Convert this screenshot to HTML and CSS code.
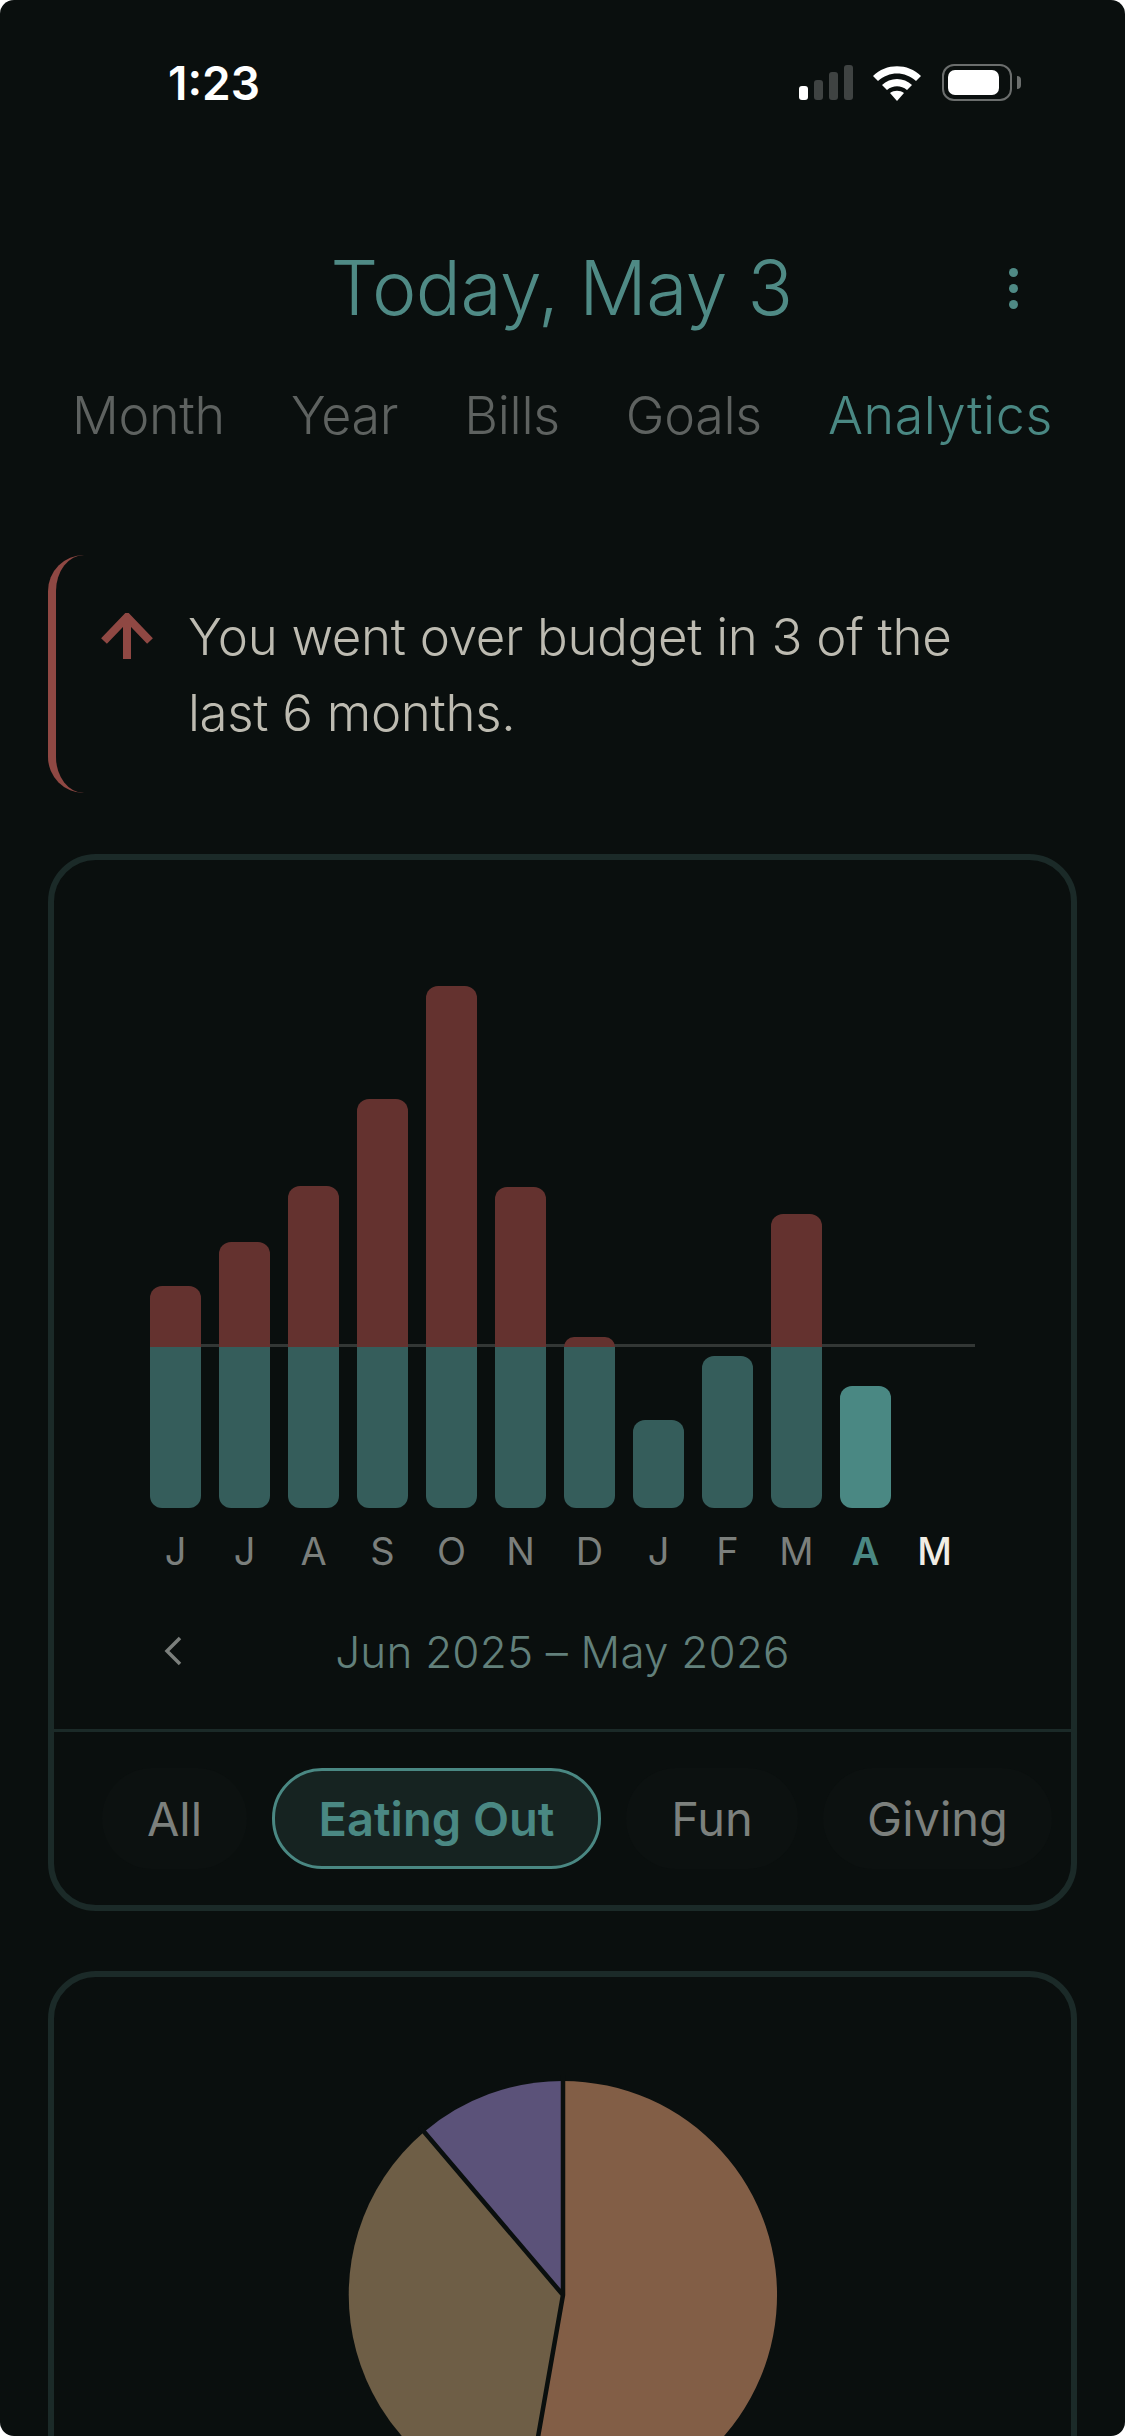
FILE: index.html

```html
<!DOCTYPE html>
<html lang="en">
    <head>
        <meta charset="UTF-8">
        <title>Analytics</title>
        <link rel="stylesheet" href="styles.css">
    </head>
    <body>
        <div class="screen">
            <div class="status-bar">
                <span class="clock">1:23</span>
                <div class="status-icons">
                    <div class="signal">
                        <span class="sig sig-1"></span>
                        <span class="sig sig-2"></span>
                        <span class="sig sig-3"></span>
                        <span class="sig sig-4"></span>
                    </div>
                    <svg class="wifi" width="50" height="37" viewBox="0 0 50 37">
                        <path d="M1 12 C14 -1 36 -1 49 12 L44 17 C33 7 17 7 6 17 Z" fill="#fff"/>
                        <path d="M10 21 C18 13 32 13 40 21 L35 26 C29 21 21 21 15 26 Z" fill="#fff"/>
                        <path d="M18 29 C22 26 28 26 32 29 L25 37 Z" fill="#fff"/>
                    </svg>
                    <div class="battery"><span class="battery-fill"></span></div>
                    <span class="battery-nub"></span>
                </div>
            </div>

            <div class="header">
                <h1>Today, May 3</h1>
                <div class="dots"><span></span><span></span><span></span></div>
            </div>

            <nav class="tabs">
                <a>Month</a>
                <a>Year</a>
                <a>Bills</a>
                <a>Goals</a>
                <a class="active">Analytics</a>
            </nav>

            <div class="notice">
                <svg class="arrow" width="52" height="46" viewBox="0 0 52 46">
                    <path d="M26 46 V5 M3 28 L26 4 L49 28" fill="none" stroke="#8f4843" stroke-width="8"/>
                </svg>
                <p>You went over budget in 3 of the last 6 months.</p>
            </div>

            <div class="card">
                <div class="chart">
                    <div class="limit"></div>
                    <div class="col"><div class="over" style="height: 61px"></div><div class="under" style="height: 161px"></div></div>
                    <div class="col"><div class="over" style="height: 105px"></div><div class="under" style="height: 161px"></div></div>
                    <div class="col"><div class="over" style="height: 161px"></div><div class="under" style="height: 161px"></div></div>
                    <div class="col"><div class="over" style="height: 248px"></div><div class="under" style="height: 161px"></div></div>
                    <div class="col"><div class="over" style="height: 361px"></div><div class="under" style="height: 161px"></div></div>
                    <div class="col"><div class="over" style="height: 160px"></div><div class="under" style="height: 161px"></div></div>
                    <div class="col"><div class="over" style="height: 10px"></div><div class="under" style="height: 161px"></div></div>
                    <div class="col"><div class="under solo" style="height: 88px"></div></div>
                    <div class="col"><div class="under solo" style="height: 152px"></div></div>
                    <div class="col"><div class="over" style="height: 133px"></div><div class="under" style="height: 161px"></div></div>
                    <div class="col"><div class="under solo current" style="height: 122px"></div></div>
                    <div class="col"></div>
                </div>
                <div class="months">
                    <span>J</span><span>J</span><span>A</span><span>S</span><span>O</span><span>N</span>
                    <span>D</span><span>J</span><span>F</span><span>M</span>
                    <span class="month-active">A</span><span class="month-now">M</span>
                </div>
                <div class="range">
                    <svg class="chevron" width="18" height="30" viewBox="0 0 18 30">
                        <path d="M16 2 L3 15 L16 28" fill="none" stroke="#7b7f7c" stroke-width="3.5"/>
                    </svg>
                    <span class="range-label">Jun 2025 – May 2026</span>
                </div>
                <div class="chips">
                    <span class="chip chip-all">All</span>
                    <span class="chip chip-selected">Eating Out</span>
                    <span class="chip chip-fun">Fun</span>
                    <span class="chip chip-giving">Giving</span>
                </div>
            </div>

            <div class="card card-pie">
                <svg class="pie" width="440" height="440" viewBox="0 0 440 440">
                    <path d="M220 220 L220 6 A214 214 0 1 1 182.6 430.7 Z" fill="#825e46"/>
                    <path d="M220 220 L182.6 430.7 A214 214 0 0 1 81 57 Z" fill="#6e5e46"/>
                    <path d="M220 220 L81 57 A214 214 0 0 1 220 6 Z" fill="#5b5279"/>
                    <path d="M220 0 V220 L182 436 M220 220 L77 52" fill="none" stroke="#0a0f0e" stroke-width="4.5"/>
                </svg>
            </div>
        </div>
    </body>
</html>
```

FILE: styles.css

```css
html, body {
    margin: 0;
    padding: 0;
    background-color: #fff;
}
.screen {
    width: 1125px;
    height: 2436px;
    overflow: hidden;
    box-sizing: border-box;
    padding: 0 48px;
    background-color: #0a0f0e;
    border-radius: 14px;
    font-family: Inter, "Liberation Sans", sans-serif;
}

/* status bar */
.status-bar {
    display: flex;
    justify-content: space-between;
    align-items: flex-start;
    height: 240px;
    padding-left: 120px;
}
.clock {
    margin-top: 56px;
    color: #fff;
    font-size: 46px;
    font-weight: 600;
    line-height: 54px;
}
.status-icons {
    display: flex;
    align-items: flex-start;
    margin-top: 64px;
    margin-right: 56px;
}
.signal {
    display: flex;
    align-items: flex-end;
    gap: 6px;
    height: 36px;
    margin-right: 19px;
}
.sig {
    width: 9px;
    border-radius: 3px;
    background-color: #3f4342;
}
.sig-1 { height: 14px; background-color: #fff; }
.sig-2 { height: 20px; }
.sig-3 { height: 28px; }
.sig-4 { height: 35px; }
.wifi {
    margin-right: 20px;
}
.battery {
    box-sizing: border-box;
    width: 70px;
    height: 37px;
    padding: 4px;
    border: 2px solid #6b6e6d;
    border-radius: 12px;
}
.battery-fill {
    display: block;
    width: 51px;
    height: 25px;
    border-radius: 7px;
    background-color: #fff;
}
.battery-nub {
    width: 4px;
    height: 13px;
    margin: 12px 0 0 5px;
    border-radius: 0 4px 4px 0;
    background-color: #6b6e6d;
}

/* header */
.header {
    position: relative;
    display: flex;
    justify-content: center;
}
h1 {
    margin: 0;
    padding-right: 2px;
    color: #4f8a85;
    font-size: 75px;
    font-weight: 350;
    letter-spacing: -0.5px;
    line-height: 96px;
}
.dots {
    position: absolute;
    right: 59px;
    top: 28px;
    display: flex;
    flex-direction: column;
    gap: 7px;
}
.dots span {
    width: 9px;
    height: 9px;
    border-radius: 50%;
    background-color: #4f8a85;
}

.tabs {
    display: flex;
    justify-content: space-between;
    margin: 48px 24px 0;
    color: #5e6260;
    font-size: 52px;
    font-weight: 350;
    letter-spacing: -0.3px;
    line-height: 64px;
}
.tabs .active {
    color: #4a8883;
    letter-spacing: 0.6px;
}

/* notice */
.notice {
    box-sizing: border-box;
    display: flex;
    align-items: flex-start;
    height: 238px;
    margin-top: 107px;
    padding: 58px 100px 0 45px;
    border-left: 8px solid #8f4843;
    border-radius: 36px 0 0 36px;
}
.arrow {
    flex: none;
    margin-right: 35px;
}
.notice p {
    margin: 0;
    margin-top: -14px;
    color: #bdbbb1;
    font-size: 51px;
    font-weight: 350;
    letter-spacing: -0.3px;
    line-height: 76px;
}

/* cards */
.card {
    box-sizing: border-box;
    height: 1057px;
    margin-top: 61px;
    border: 6px solid #1b2a28;
    border-radius: 48px;
}
.chart {
    position: relative;
    display: flex;
    align-items: flex-end;
    gap: 18px;
    height: 648px;
    padding-left: 96px;
    box-sizing: border-box;
}
.limit {
    position: absolute;
    left: 96px;
    width: 825px;
    bottom: 161px;
    height: 3px;
    background-color: #333735;
}
.col {
    position: relative;
    width: 51px;
}
.over {
    border-radius: 12px 12px 0 0;
    background-color: #64322f;
}
.under {
    border-radius: 0 0 12px 12px;
    background-color: #355d5b;
}
.under.solo {
    border-radius: 12px;
}
.under.current {
    background-color: #4a8883;
}

.months {
    display: flex;
    gap: 18px;
    padding: 20px 0 0 96px;
    color: #7b7f7c;
    font-size: 38px;
    font-weight: 400;
    line-height: 46px;
}
.months span {
    width: 51px;
    text-align: center;
}
.months .month-active {
    color: #4a8883;
    font-weight: 600;
}
.months .month-now {
    color: #f0ede4;
    font-weight: 500;
}

.range {
    position: relative;
    display: flex;
    justify-content: center;
    height: 56px;
    margin-top: 50px;
}
.chevron {
    position: absolute;
    left: 110px;
    top: 12px;
}
.range-label {
    color: #62807b;
    font-size: 44px;
    font-weight: 350;
    letter-spacing: 0.2px;
    line-height: 56px;
}

.chips {
    display: flex;
    gap: 25px;
    margin-top: 49px;
    padding: 36px 0 0 48px;
    border-top: 3px solid #1b2a28;
}
.chip {
    box-sizing: border-box;
    display: flex;
    justify-content: center;
    align-items: center;
    height: 101px;
    border-radius: 50px;
    background-color: #0c1110;
    color: #7c807d;
    font-size: 47px;
    font-weight: 400;
}
.chip-all { width: 145px; }
.chip-fun { width: 172px; }
.chip-giving { width: 229px; }
.chip-selected {
    width: 329px;
    border: 3px solid #4a8883;
    background-color: #162321;
    color: #4a8883;
    font-weight: 600;
}

.card-pie {
    display: flex;
    justify-content: center;
    align-items: flex-start;
    height: 700px;
    margin-top: 60px;
    padding-top: 98px;
}
.pie {
    flex: none;
}
```
